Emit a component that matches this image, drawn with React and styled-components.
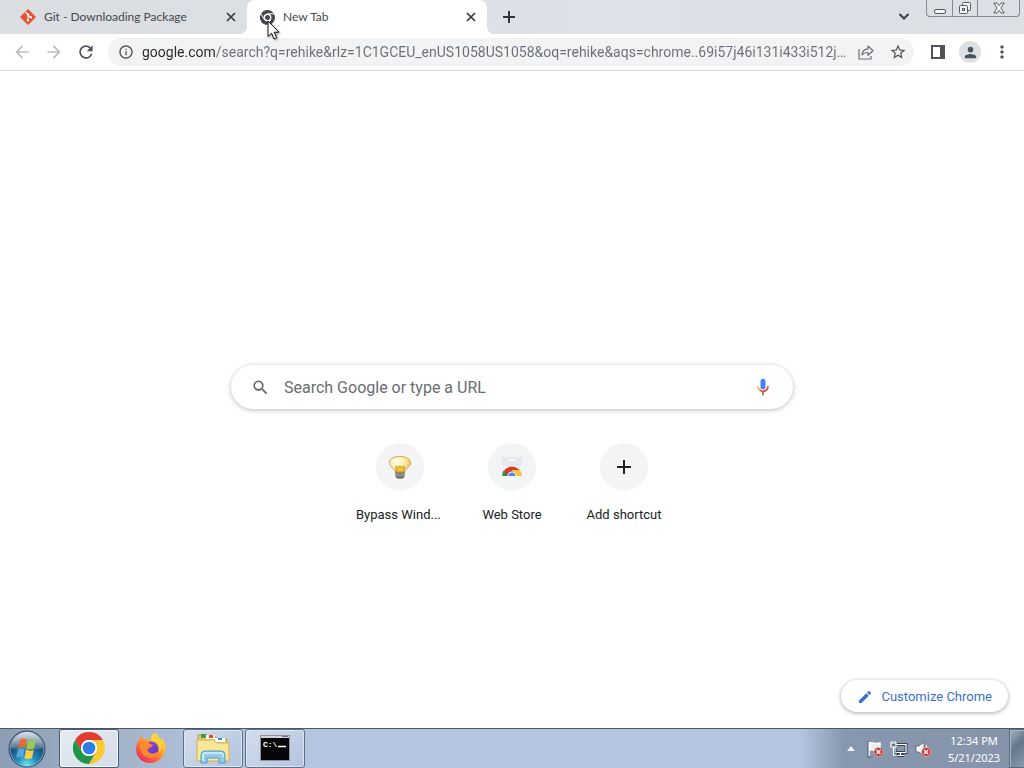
import React from "react";
import styled, { createGlobalStyle, css } from "styled-components";
import {
  MdAdd, MdArrowBack, MdArrowForward, MdEdit,
  MdMoreVert, MdPerson, MdRefresh, MdSearch, MdStarBorder, MdInfoOutline,
} from "react-icons/md";

const uiFont = '"Noto Sans", "Open Sans", sans-serif';

const GlobalStyle = createGlobalStyle`
  * { box-sizing: border-box; }
  body { margin: 0; background: #fff; font-family: Roboto, sans-serif; }
  button, input { font: inherit; color: inherit; border: 0; padding: 0; margin: 0; background: none; }
  button { cursor: default; }
  svg { display: block; flex: none; }
`;

const Desktop = styled.div`
  min-height: 100vh;
  display: flex;
  flex-direction: column;
`;

const TabStrip = styled.header`
  height: 34px;
  display: flex;
  align-items: flex-start;
  padding: 0 4px 0 7px;
  background: linear-gradient(90deg, #dadde1, #dee1e7 60%, #dcdfe4);
`;

const TabList = styled.div`
  display: flex;
  min-width: 0;
  margin-right: 5px;
`;

const Tab = styled.div`
  position: relative;
  width: 240px;
  height: 34px;
  display: flex;
  align-items: center;
  padding: 0 9px 0 13px;
  gap: 8px;
  color: #45484c;
  font-family: Lato, sans-serif;
  ${(p) => p.$active && css`
    background: #fff;
    border-radius: 8px 8px 0 0;
    &::before, &::after {
      content: "";
      position: absolute;
      bottom: 0;
      width: 8px;
      height: 8px;
    }
    &::before { left: -8px; background: radial-gradient(circle at 0 0, transparent 8px, #fff 8px); }
    &::after { right: -8px; background: radial-gradient(circle at 100% 0, transparent 8px, #fff 8px); }
  `}
`;

const TabTitle = styled.button`
  flex: 1;
  min-width: 0;
  text-align: left;
  font-size: 12px;
  line-height: 16px;
  white-space: nowrap;
  overflow: hidden;
`;

const IconButton = styled.button`
  width: ${(p) => p.$size || 32}px;
  height: ${(p) => p.$size || 32}px;
  flex: none;
  display: flex;
  align-items: center;
  justify-content: center;
  border-radius: 50%;
  color: ${(p) => p.$color || "#505357"};
`;

const StripSpacer = styled.div`
  flex: 1;
`;

const WindowControls = styled.div`
  display: flex;
  height: 17px;
  margin-left: 6px;
  border: 1px solid #85888e;
  border-top: 0;
  border-radius: 0 0 4px 4px;
`;

const WindowButton = styled.button`
  width: ${(p) => (p.$wide ? 42 : 25)}px;
  display: flex;
  align-items: center;
  justify-content: center;
  & + & { border-left: 1px solid #85888e; }
`;

const Toolbar = styled.nav`
  height: 37px;
  display: flex;
  align-items: center;
  padding: 0 6px;
  border-bottom: 1px solid #d9dadc;
  background: #fff;
`;

const AddressBar = styled.div`
  flex: 1;
  min-width: 0;
  height: 28px;
  margin: 0 8px 0 6px;
  padding: 0 4px 0 10px;
  display: flex;
  align-items: center;
  gap: 8px;
  border-radius: 14px;
  background: #f1f3f4;
  color: #505357;
`;

const AddressInput = styled.input`
  flex: 1;
  min-width: 0;
  height: 20px;
  font-size: 14px;
  line-height: 20px;
  outline: 0;
  text-overflow: ellipsis;
  color: transparent;
  background: linear-gradient(90deg, #27292c 73px, #6b6f74 73px);
  background-clip: text;
  -webkit-background-clip: text;
`;

const Avatar = styled.button`
  width: 22px;
  height: 22px;
  margin: 0 5px;
  display: flex;
  align-items: center;
  justify-content: center;
  border-radius: 50%;
  background: #dee1e3;
  color: #46525c;
`;

const Page = styled.main`
  flex: 1;
  display: flex;
  flex-direction: column;
  align-items: center;
  padding: 294px 16px 16px;
  background: #fff;
`;

const SearchBox = styled.form`
  width: 100%;
  max-width: 562px;
  height: 44px;
  display: flex;
  align-items: center;
  padding: 0 20px;
  gap: 14px;
  border-radius: 22px;
  background: #fff;
  box-shadow: 0 1px 5px rgba(32, 33, 36, 0.3);
  color: #5f6368;
`;

const SearchInput = styled.input`
  flex: 1;
  min-width: 0;
  padding-top: 2px;
  font-size: 16px;
  line-height: 24px;
  outline: 0;
  &::placeholder { color: #6a6d71; opacity: 1; }
`;

const Shortcuts = styled.div`
  display: flex;
  justify-content: center;
  margin-top: 34px;
`;

const Shortcut = styled.a`
  width: 112px;
  display: flex;
  flex-direction: column;
  align-items: center;
  gap: 15px;
  color: #202124;
  text-decoration: none;
  font-size: 13px;
  line-height: 18px;
`;

const ShortcutIcon = styled.span`
  width: 48px;
  height: 48px;
  display: flex;
  align-items: center;
  justify-content: center;
  border-radius: 50%;
  background: #f3f4f6;
`;

const ShortcutLabel = styled.span`
  width: 88px;
  text-align: ${(p) => (p.$clipped ? "left" : "center")};
  overflow: hidden;
  white-space: nowrap;
`;

const CustomizeButton = styled.button`
  height: 32px;
  margin-top: auto;
  align-self: flex-end;
  display: flex;
  align-items: center;
  gap: 8px;
  padding: 2px 16px 0;
  border-radius: 16px;
  background: #fff;
  box-shadow: 0 1px 4px rgba(32, 33, 36, 0.4);
  color: #3a70cd;
  font-size: 13px;
  line-height: 18px;
`;

const Taskbar = styled.footer`
  height: 40px;
  display: flex;
  border-top: 1px solid #46566c;
  background: linear-gradient(90deg, #8d9eb4 0, #a4b5cb 130px, #b4c6df 230px, #b4c6df calc(100% - 224px), #8797af calc(100% - 180px), #8594aa);
`;

const StartButton = styled.button`
  width: 54px;
  margin-right: 5px;
  display: flex;
  align-items: center;
  justify-content: center;
`;

const TaskButton = styled.button`
  width: 60px;
  height: 39px;
  margin-right: 2px;
  padding-bottom: 1px;
  display: flex;
  align-items: center;
  justify-content: center;
  border: 1px solid transparent;
  border-radius: 3px;
  ${(p) => p.$open && css`
    border-color: #5d708b;
    background: linear-gradient(135deg, #d3ddec, #b3c4dd);
    box-shadow: inset 0 0 0 1px #dce5f1;
  `}
  ${(p) => p.$active && css`
    border-color: #4b5a70;
    background: linear-gradient(135deg, #e6ebf3, #d5dde9);
    box-shadow: inset 0 0 0 1px #f4f6fa;
  `}
`;

const Tray = styled.div`
  margin-left: auto;
  display: flex;
  align-items: center;
`;

const TrayButton = styled.button`
  width: 24px;
  height: 32px;
  display: flex;
  align-items: center;
  justify-content: center;
`;

const Clock = styled.time`
  width: 74px;
  padding-left: 4px;
  color: #fff;
  font-family: ${uiFont};
  font-size: 11px;
  line-height: 17px;
  text-align: center;
`;

const ShowDesktop = styled.button`
  width: 15px;
  height: 39px;
  border: 1px solid #5b6a7f;
  border-right: 0;
  background: linear-gradient(135deg, #a5b2c2, #65758b 45%, #8c9caf);
  box-shadow: inset 1px 1px 0 #a9b6c6;
`;

const Cursor = styled.svg`
  position: absolute;
  left: 20px;
  top: 20px;
  z-index: 2;
  pointer-events: none;
  filter: drop-shadow(1px 1px 1px rgba(0, 0, 0, 0.4));
`;

const CloseIcon = () => (
  <svg width="10" height="10" viewBox="0 0 10 10">
    <path d="m1 1 8 8M9 1 1 9" stroke="currentColor" strokeWidth="1.700" />
  </svg>
);

const GitIcon = () => (
  <svg width="16" height="16" viewBox="0 0 16 16">
    <path d="M8 .3 15.7 8 8 15.7.3 8Z" fill="#e6522f" stroke="#e6522f" strokeWidth=".6" strokeLinejoin="round" />
    <path d="M5.4 3 8 5.6v6M8 5.800l2.700 2.500" fill="none" stroke="#fff" strokeWidth="1.1" />
    <circle cx="8" cy="5.4" r="1.2" fill="#fff" />
    <circle cx="8" cy="11.3" r="1.2" fill="#fff" />
    <circle cx="10.8" cy="8.3" r="1.2" fill="#fff" />
  </svg>
);

const ChromeMark = ({ size, mono }) => (
  <svg width={size} height={size} viewBox="0 0 48 48">
    <path d="M24 12H44.78A24 24 0 0 0 3.2 12L13.6 30A12 12 0 0 1 24 12Z" fill={mono ? "#44484d" : "#e33b2e"} />
    <path d="M44.78 12H24A12 12 0 0 1 34.39 30L24 48A24 24 0 0 0 44.78 12Z" fill={mono ? "#44484d" : "#fcc934"} />
    <path d="M13.6 30 3.2 12A24 24 0 0 0 24 48L34.39 30A12 12 0 0 1 13.6 30Z" fill={mono ? "#44484d" : "#21964a"} />
    {mono && <path d="M24 12H45M13.6 30 3.2 12M34.4 30 24 48" stroke="#fff" strokeWidth="3" />}
    <circle cx="24" cy="24" r="12" fill="#fff" />
    <circle cx="24" cy="24" r={mono ? 8 : 9.5} fill={mono ? "#44484d" : "#2f7de9"} />
  </svg>
);

const ShareIcon = () => (
  <svg width="18" height="18" viewBox="0 0 18 18" fill="none" stroke="#6b6f74" strokeWidth="1.2" strokeLinejoin="round">
    <path d="M2 6v10h12v-3" />
    <path d="M5 12c.3-4 2.5-6 6-6.200V3l5 4.700-5 4.600V9.500c-3 0-4.700.8-6 2.500Z" />
  </svg>
);

const SidePanelIcon = () => (
  <svg width="16" height="16" viewBox="0 0 16 16">
    <path d="M1 1h14v14H1ZM3 3v10h7V3Z" fill="#505357" fillRule="evenodd" />
  </svg>
);

const MicIcon = () => (
  <svg width="20" height="20" viewBox="0 0 24 24">
    <rect x="9" y="2" width="6" height="13" rx="3" fill="#4285f4" />
    <path d="M11 18h2v4h-2Z" fill="#8a6b45" />
    <path d="M5 11h2a5 5 0 0 0 1.500 3.600L7 16a7 7 0 0 1-2-5Z" fill="#f6bc24" />
    <path d="M7 16l1.500-1.400A5 5 0 0 0 17 11h2A7 7 0 0 1 7 16Z" fill="#ea4335" />
  </svg>
);

const BulbIcon = () => (
  <svg width="24" height="24" viewBox="0 0 24 24">
    <defs>
      <radialGradient id="bulb" cx=".35" cy=".3" r=".7">
        <stop offset="0" stopColor="#fffdf0" />
        <stop offset=".6" stopColor="#fdeaa0" />
        <stop offset="1" stopColor="#efbe45" />
      </radialGradient>
    </defs>
    <path d="M1.500 7C2.500-.5 21-.5 22.500 7c.6 4-3.500 6-5.500 8.500L16.500 18h-9L7 15.500C5 13 1 11 1.500 7Z" fill="url(#bulb)" stroke="#cfa562" />
    <path d="M8 17V11l2 1.500 2-1.500 2 1.500 2-1.500v6Z" fill="#f4c332" stroke="#c5951d" />
    <path d="M7.500 17.500h9v4l-1.500 2H9L7.500 21.500Z" fill="#5f6261" />
    <path d="M8 19h8M8 21h8" stroke="#c5c8c5" strokeWidth=".8" />
  </svg>
);

const StoreIcon = () => (
  <svg width="24" height="24" viewBox="0 0 24 24">
    <path d="M1 2h22l-2 9H3Z" fill="#e6eaec" />
    <path d="M8 4h8v2H8Z" fill="#f7f8f9" />
    <path d="M2.500 21a9.500 9.500 0 0 1 19 0Z" fill="#d93a30" />
    <path d="M3.300 15.500A10 10 0 0 0 2.500 21H9Z" fill="#23944c" />
    <path d="M12 15h7.600q2 2.500 1.900 6H15Z" fill="#fbc62b" />
    <path d="M7.500 21a4.500 4.500 0 0 1 9 0Z" fill="#f3f5f7" />
    <path d="M8.500 21a3.500 3.500 0 0 1 7 0Z" fill="#4489ed" />
  </svg>
);

const StartOrb = () => (
  <svg width="38" height="38" viewBox="0 0 38 38">
    <defs>
      <radialGradient id="orb" cx=".5" cy=".95" r=".85">
        <stop offset="0" stopColor="#65eef8" />
        <stop offset=".35" stopColor="#2087b7" />
        <stop offset=".7" stopColor="#205078" />
        <stop offset="1" stopColor="#617b94" />
      </radialGradient>
      <linearGradient id="gloss" x2="0" y2="1">
        <stop offset="0" stopColor="#fff" stopOpacity=".75" />
        <stop offset="1" stopColor="#fff" stopOpacity=".12" />
      </linearGradient>
    </defs>
    <circle cx="19" cy="19" r="18" fill="url(#orb)" stroke="#29445f" />
    <circle cx="19" cy="19" r="17" fill="none" stroke="#a6ccdf" strokeOpacity=".6" />
    <path d="M3 18a16 16 0 0 1 32 0q-16 4-32 0Z" fill="url(#gloss)" />
    <path d="M12.200 9.500q3-2 6.500-.2L17 18q-3.500-1.500-6.800.3Z" fill="#e76b32" />
    <path d="M20 10.200q4 1.500 8-.2L26 18.500q-4 1.700-7.700 0Z" fill="#98c951" />
    <path d="M9.800 19.500q3.500-1.700 6.900-.3L15 27.600q-3.500-1.500-6.800.2Z" fill="#54a9df" />
    <path d="M18 19.800q4 1.600 7.700.1L24 28q-3.800 1.800-7.700.2Z" fill="#f9ce45" />
  </svg>
);

const FirefoxIcon = () => (
  <svg width="32" height="32" viewBox="0 0 32 32">
    <defs>
      <linearGradient id="fox" x1="1" y1="0" x2=".2" y2="1">
        <stop offset="0" stopColor="#fff04c" />
        <stop offset=".35" stopColor="#ffbd31" />
        <stop offset=".65" stopColor="#ff7139" />
        <stop offset="1" stopColor="#e92564" />
      </linearGradient>
      <linearGradient id="globe" x2="1" y2="1">
        <stop offset="0" stopColor="#9b43d4" />
        <stop offset="1" stopColor="#5b3bc4" />
      </linearGradient>
    </defs>
    <path d="M20 1c4 3 4 5 6 7l1-2c4 5 5 11 2 16-3 6-8 9-14 9C7 31 1 25 1 17c0-4 1-7 4-10l1-4 3 5c2-1 5-1 7 0C15 5 17 2 20 1Z" fill="url(#fox)" />
    <circle cx="16" cy="17" r="7.500" fill="url(#globe)" />
    <path d="M5 10c4-2 8-1 10 2l3 1c-1 2-3 2-4 3-2 1-2 4 1 5 3 2 6-1 9-1-2 5-7 7-12 5C6 23 4 16 5 10Z" fill="#ff8a2b" />
    <path d="M17 9c6-1 9 5 7 11 4-4 3-11-2-13-3-2-3-4-2-6-3 2-4 5-3 8Z" fill="#ffd83d" />
  </svg>
);

const ExplorerIcon = () => (
  <svg width="34" height="32" viewBox="0 0 34 32">
    <path d="M2 3h9l2 2h7l2 2h9v20H2Z" fill="#e5ca76" stroke="#bb9d4c" />
    <path d="M5 2h5v4H5Z" fill="#3e9b48" />
    <path d="M10 3h9v4h-9Z" fill="#fff9df" />
    <path d="M13 3h4v3h-4Z" fill="#d94b3b" />
    <path d="M19 6h10v4H19Z" fill="#fff" />
    <path d="M22 6h4v2h-4Z" fill="#3a91d5" />
    <path d="M1 8h17l3 3h12v18H1Z" fill="#fae698" stroke="#d0af58" />
    <path d="M5 31V23q0-4 4-4h16q4 0 4 4v8h-6v-5H11v5Z" fill="#8fcdea" stroke="#4a9bc9" />
    <path d="M7 29v-6q0-2 2-2h16q2 0 2 2v2" fill="none" stroke="#d6f1fb" strokeWidth="1.500" />
  </svg>
);

const PromptText = styled.text`
  font-family: "Liberation Mono", monospace;
  font-size: 8px;
  font-weight: bold;
`;

const ConsoleIcon = () => (
  <svg width="30" height="26" viewBox="0 0 30 26">
    <rect x=".5" y=".5" width="29" height="25" fill="#060708" stroke="#8d939b" />
    <path d="M1 1h28v2H1Z" fill="#d1d5da" />
    <path d="M22 1h6v1h-6Z" fill="#687587" />
    <PromptText x="3" y="12" fill="#fff">C:\</PromptText>
    <path d="M18 11.500h8" stroke="#fff" strokeWidth="1.500" />
  </svg>
);

const ErrorBadge = ({ x, y }) => (
  <g transform={`translate(${x} ${y})`}>
    <circle r="4.500" fill="#cf352f" stroke="#f0bab5" strokeWidth=".7" />
    <path d="m-2-2 4 4M2-2l-4 4" stroke="#fff" strokeWidth="1.400" />
  </g>
);

const FlagIcon = () => (
  <svg width="18" height="18" viewBox="0 0 18 18">
    <path d="M3 2v14M4 3c4-1 5 2 10 0v7c-5 2-6-1-10 0Z" fill="#e9eef4" stroke="#fff" strokeWidth="1.500" />
    <path d="M2 1v16h3" fill="none" stroke="#3e4855" strokeWidth=".7" />
    <ErrorBadge x={12.5} y={12} />
  </svg>
);

const NetworkIcon = () => (
  <svg width="18" height="18" viewBox="0 0 18 18" fill="none">
    <path d="M5 4.500h11v8H5ZM7 15.500h7M10.500 13v2" stroke="#38424f" strokeWidth="3" />
    <path d="M5 4.500h11v8H5ZM7 15.500h7M10.500 13v2" stroke="#fff" strokeWidth="1.200" />
    <path d="M1 3h5v4H1ZM3.500 7v8H6" fill="#65758a" stroke="#fff" strokeWidth="1.200" />
    <path d="M2 1v2M5 1v2" stroke="#fff" />
  </svg>
);

const SpeakerIcon = () => (
  <svg width="18" height="18" viewBox="0 0 18 18">
    <path d="M2 6h3l5-4v14l-5-4H2Z" fill="#f7f9fc" stroke="#475463" strokeWidth=".7" />
    <path d="M12 5q2 3 0 6" fill="none" stroke="#fff" />
    <ErrorBadge x={12} y={12} />
  </svg>
);

const windowIcon = { fill: "#f5f6f8", stroke: "#555960", strokeWidth: 1 };

export default function App() {
  return (
    <Desktop>
      <GlobalStyle />
      <TabStrip>
        <TabList>
          <Tab>
            <GitIcon />
            <TabTitle>Git - Downloading Package</TabTitle>
            <IconButton $size={14} $color="#34373b" aria-label="Close Git tab"><CloseIcon /></IconButton>
          </Tab>
          <Tab $active>
            <ChromeMark size={15} mono />
            <TabTitle>New Tab</TabTitle>
            <IconButton $size={14} $color="#34373b" aria-label="Close New Tab"><CloseIcon /></IconButton>
            <Cursor width="14" height="21" viewBox="0 0 14 21">
              <path d="M1 1v15.500l3.500-3.300L7 19l2.700-1.200-2.500-5.600H12Z" fill="#fff" stroke="#111" />
            </Cursor>
          </Tab>
        </TabList>
        <IconButton $size={34} $color="#303338" aria-label="New tab">
          <svg width="12" height="12" viewBox="0 0 12 12"><path d="M6 0v12M0 6h12" stroke="currentColor" strokeWidth="2" /></svg>
        </IconButton>
        <StripSpacer />
        <IconButton $size={32} $color="#3c4043" aria-label="Search tabs">
          <svg width="10" height="7" viewBox="0 0 10 7"><path d="m.5 1 4.500 4.500L9.500 1" fill="none" stroke="currentColor" strokeWidth="2" /></svg>
        </IconButton>
        <WindowControls>
          <WindowButton aria-label="Minimize">
            <svg width="12" height="14" viewBox="0 0 12 14" {...windowIcon}><rect x=".5" y="8.500" width="11" height="4" rx="1.500" /></svg>
          </WindowButton>
          <WindowButton aria-label="Restore">
            <svg width="14" height="14" viewBox="0 0 14 14" {...windowIcon}>
              <rect x="4.500" y="1.500" width="8" height="8" rx="1" />
              <rect x="1.500" y="4.500" width="8" height="8" rx="1" />
              <rect x="4.500" y="7.500" width="2" height="2" />
            </svg>
          </WindowButton>
          <WindowButton $wide aria-label="Close">
            <svg width="12" height="12" viewBox="0 0 12 12" {...windowIcon}>
              <path d="M.8 1h3L6 3.700 8.200 1h3L7.800 6l3.400 5h-3L6 8.300 3.800 11h-3L4.200 6Z" />
            </svg>
          </WindowButton>
        </WindowControls>
      </TabStrip>

      <Toolbar>
        <IconButton $color="#bcbec0" aria-label="Back"><MdArrowBack size={20} /></IconButton>
        <IconButton $color="#bcbec0" aria-label="Forward"><MdArrowForward size={20} /></IconButton>
        <IconButton aria-label="Reload"><MdRefresh size={20} /></IconButton>
        <AddressBar>
          <MdInfoOutline size={16} />
          <AddressInput
            aria-label="Address and search bar"
            defaultValue="google.com/search?q=rehike&rlz=1C1GCEU_enUS1058US1058&oq=rehike&aqs=chrome..69i57j46i131i433i512j..."
          />
          <IconButton $size={24} aria-label="Share"><ShareIcon /></IconButton>
          <IconButton $size={24} aria-label="Bookmark"><MdStarBorder size={18} /></IconButton>
        </AddressBar>
        <IconButton aria-label="Side panel"><SidePanelIcon /></IconButton>
        <Avatar aria-label="Profile"><MdPerson size={17} /></Avatar>
        <IconButton aria-label="Menu"><MdMoreVert size={20} /></IconButton>
      </Toolbar>

      <Page>
        <SearchBox onSubmit={(e) => e.preventDefault()}>
          <MdSearch size={19} />
          <SearchInput type="text" aria-label="Search" placeholder="Search Google or type a URL" />
          <IconButton $size={20} type="button" aria-label="Search by voice"><MicIcon /></IconButton>
        </SearchBox>
        <Shortcuts>
          <Shortcut href="#bypass">
            <ShortcutIcon><BulbIcon /></ShortcutIcon>
            <ShortcutLabel $clipped>Bypass Wind...</ShortcutLabel>
          </Shortcut>
          <Shortcut href="#store">
            <ShortcutIcon><StoreIcon /></ShortcutIcon>
            <ShortcutLabel>Web Store</ShortcutLabel>
          </Shortcut>
          <Shortcut href="#add">
            <ShortcutIcon><MdAdd size={24} /></ShortcutIcon>
            <ShortcutLabel>Add shortcut</ShortcutLabel>
          </Shortcut>
        </Shortcuts>
        <CustomizeButton><MdEdit size={16} />Customize Chrome</CustomizeButton>
      </Page>

      <Taskbar>
        <StartButton aria-label="Start"><StartOrb /></StartButton>
        <TaskButton $open $active aria-label="Chrome"><ChromeMark size={32} /></TaskButton>
        <TaskButton aria-label="Firefox"><FirefoxIcon /></TaskButton>
        <TaskButton $open aria-label="File Explorer"><ExplorerIcon /></TaskButton>
        <TaskButton $open aria-label="Command Prompt"><ConsoleIcon /></TaskButton>
        <Tray>
          <TrayButton aria-label="Show hidden icons">
            <svg width="8" height="5" viewBox="0 0 8 5"><path d="m4 0 4 5H0Z" fill="#f0f4f8" /></svg>
          </TrayButton>
          <TrayButton aria-label="Action center"><FlagIcon /></TrayButton>
          <TrayButton aria-label="Network"><NetworkIcon /></TrayButton>
          <TrayButton aria-label="Volume"><SpeakerIcon /></TrayButton>
          <Clock>12:34 PM<br />5/21/2023</Clock>
          <ShowDesktop aria-label="Show desktop" />
        </Tray>
      </Taskbar>
    </Desktop>
  );
}
